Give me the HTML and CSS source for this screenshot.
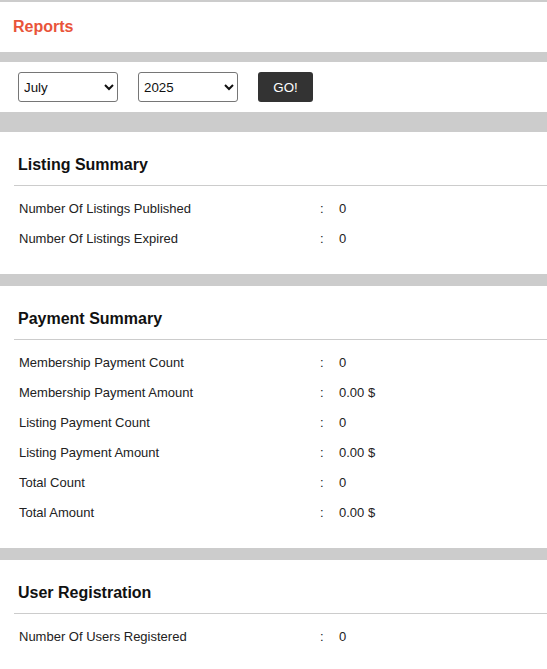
FILE: index.html
```html
<!DOCTYPE html>
<html lang="en">
<head>
  <meta charset="UTF-8" />
  <meta name="viewport" content="width=device-width, initial-scale=1.0" />
  <title>Reports</title>
  <link rel="stylesheet" href="styles.css">
</head>
<body>
  <div class="page-title">Reports</div>

  <div class="filter-bar">
    <select id="month">
      <option>January</option>
      <option>February</option>
      <option>March</option>
      <option>April</option>
      <option>May</option>
      <option>June</option>
      <option selected>July</option>
      <option>August</option>
      <option>September</option>
      <option>October</option>
      <option>November</option>
      <option>December</option>
    </select>
    <select id="year">
      <option>2023</option>
      <option>2024</option>
      <option selected>2025</option>
    </select>
    <button class="go-btn">GO!</button>
  </div>

  <div class="card">
    <div class="card-title">Listing Summary</div>
    <div class="rows">
      <div class="row"><span class="label">Number Of Listings Published</span><span class="colon">:</span><span class="value">0</span></div>
      <div class="row"><span class="label">Number Of Listings Expired</span><span class="colon">:</span><span class="value">0</span></div>
    </div>
  </div>

  <div class="card">
    <div class="card-title">Payment Summary</div>
    <div class="rows">
      <div class="row"><span class="label">Membership Payment Count</span><span class="colon">:</span><span class="value">0</span></div>
      <div class="row"><span class="label">Membership Payment Amount</span><span class="colon">:</span><span class="value">0.00 $</span></div>
      <div class="row"><span class="label">Listing Payment Count</span><span class="colon">:</span><span class="value">0</span></div>
      <div class="row"><span class="label">Listing Payment Amount</span><span class="colon">:</span><span class="value">0.00 $</span></div>
      <div class="row"><span class="label">Total Count</span><span class="colon">:</span><span class="value">0</span></div>
      <div class="row"><span class="label">Total Amount</span><span class="colon">:</span><span class="value">0.00 $</span></div>
    </div>
  </div>

  <div class="card">
    <div class="card-title">User Registration</div>
    <div class="rows">
      <div class="row"><span class="label">Number Of Users Registered</span><span class="colon">:</span><span class="value">0</span></div>
    </div>
  </div>
</body>
</html>
```

FILE: styles.css
```css
body {
  font-family: "Liberation Sans", Arial, sans-serif;
  background: #cccccc;
  margin: 0;
  padding-top: 2px;
  color: #222;
}
.page-title {
  background: white;
  height: 50px;
  line-height: 50px;
  padding-left: 13px;
  font-size: 16px;
  font-weight: bold;
  color: #e9543a;
}
.filter-bar {
  background: white;
  margin-top: 10px;
  padding: 10px 18px;
  display: flex;
  gap: 20px;
}
select {
  width: 100px;
  height: 30px;
  border: 1px solid #767676;
  border-radius: 3px;
  background: white;
  font-family: "Liberation Sans", Arial, sans-serif;
  font-size: 13.33px;
  color: #111;
  padding: 0 1px;
}
.go-btn {
  width: 55px;
  height: 30px;
  border: none;
  border-radius: 3px;
  background: #333333;
  color: white;
  font-family: "Liberation Sans", Arial, sans-serif;
  font-size: 13.33px;
  cursor: pointer;
}
.card {
  background: white;
  margin-top: 12px;
  padding: 23px 0 20px 14px;
}
.filter-bar + .card {
  margin-top: 20px;
}
.card-title {
  font-size: 16px;
  line-height: 20px;
  font-weight: bold;
  color: #111;
  padding: 0 0 10px 4px;
  border-bottom: 1px solid #cccccc;
}
.rows {
  padding-top: 8px;
}
.row {
  display: grid;
  grid-template-columns: 301px 19px auto;
  height: 30px;
  line-height: 30px;
  padding-left: 5px;
  font-size: 13px;
}
```
